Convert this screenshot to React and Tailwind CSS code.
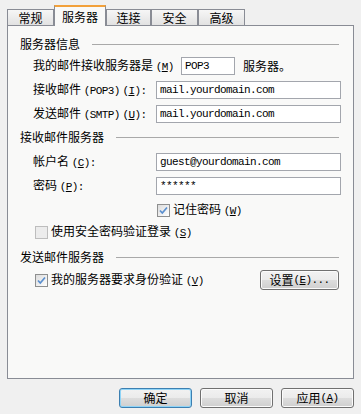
import React from 'react';

const cjk = { fontFamily: '"Noto Sans CJK SC", "Noto Sans", sans-serif' };

// half-width latin part, SimSun style (6px per char)
function M({ children }) {
  return (
    <span className="font-['Liberation_Mono',monospace] text-[11px] tracking-[-0.6px]">
      {children}
    </span>
  );
}

function Key({ k }) {
  return (
    <span className="font-['Liberation_Mono',monospace] text-[11px] tracking-[-0.6px]">
      (<span className="underline">{k}</span>)
    </span>
  );
}

function Tab({ label, w, active }) {
  if (active) {
    return (
      <div
        className={`${w} h-[21px] -mb-px z-10 bg-[#f9f9f8] border border-[#898c95] border-b-0 border-t-2 border-t-[#f2a03a] flex items-center justify-center text-[12px] text-black`}
      >
        {label}
      </div>
    );
  }
  return (
    <div
      className={`${w} h-[16px] bg-gradient-to-b from-[#f6f6f6] to-[#e2e2e2] border border-[#898c95] border-b-0 flex items-center justify-center text-[12px] text-black`}
    >
      {label}
    </div>
  );
}

function Header({ text, className = '' }) {
  return (
    <div className={`flex items-center h-[16px] ml-[12px] mr-[14px] ${className}`}>
      <span className="text-[12px] leading-none">{text}</span>
      <div className="flex-1 h-px bg-[#a9a9a9] ml-[12px]" />
    </div>
  );
}

function Input({ value, w = 'w-[185px]' }) {
  return (
    <div
      className={`${w} h-[18px] bg-white border border-[#a3a6ad] flex items-center pl-[3px] font-['Liberation_Mono',monospace] text-[11px] tracking-[-0.6px] text-black`}
    >
      {value}
    </div>
  );
}

function Check({ checked, disabled }) {
  return (
    <div
      className={`w-[13px] h-[13px] shrink-0 border ${
        disabled ? 'border-[#bdbdbd] bg-[#ececec]' : 'border-[#8e8f8f] bg-gradient-to-br from-[#dcdcdc] to-white'
      } flex items-center justify-center`}
    >
      {checked && (
        <svg width="11" height="11" viewBox="0 0 11 11">
          <path d="M2 5.5 L4.3 8 L9 2.5" fill="none" stroke="#5a8fcf" strokeWidth="1.7" />
        </svg>
      )}
    </div>
  );
}

function Button({ children, w = 'w-[73px]', primary }) {
  return (
    <div
      className={`${w} h-[20px] rounded-[3px] border ${
        primary ? 'border-[#3c7fb1] shadow-[inset_0_0_0_1px_#8fd4f7]' : 'border-[#707070] shadow-[inset_0_0_0_1px_#fbfbfb]'
      } bg-[linear-gradient(#f2f2f2_0%,#ebebeb_50%,#dddddd_51%,#cfcfcf_100%)] flex items-center justify-center text-[12px] text-black`}
    >
      {children}
    </div>
  );
}

export default function App() {
  return (
    <div style={cjk} className="w-[361px] h-[414px] bg-[#f0f0f0] pt-[4px] px-[7px] text-black overflow-hidden">
      {/* tabs */}
      <div className="flex items-end h-[21px]">
        <Tab label="常规" w="w-[47px]" />
        <Tab label="服务器" w="w-[52px]" active />
        <Tab label="连接" w="w-[45px]" />
        <Tab label="安全" w="w-[47px]" />
        <Tab label="高级" w="w-[47px]" />
      </div>

      {/* panel */}
      <div className="w-[347px] h-[354px] border border-[#898c95] bg-[#f9f9f8]">
        <Header text="服务器信息" className="mt-[10px]" />

        <div className="flex items-center h-[18px] mt-[5px] ml-[25px] text-[12px]">
          <div className="w-[148px]">
            我的邮件接收服务器是 <Key k="M" />
          </div>
          <Input value="POP3" w="w-[54px]" />
          <span className="ml-[8px]">服务器。</span>
        </div>

        <div className="flex items-center h-[18px] mt-[6px] ml-[25px] text-[12px]">
          <div className="w-[123px]">
            接收邮件 <M>(POP3)</M> <Key k="I" />
            <M>:</M>
          </div>
          <Input value="mail.yourdomain.com" />
        </div>

        <div className="flex items-center h-[18px] mt-[6px] ml-[25px] text-[12px]">
          <div className="w-[123px]">
            发送邮件 <M>(SMTP)</M> <Key k="U" />
            <M>:</M>
          </div>
          <Input value="mail.yourdomain.com" />
        </div>

        <Header text="接收邮件服务器" className="mt-[6px]" />

        <div className="flex items-center h-[18px] mt-[8px] ml-[25px] text-[12px]">
          <div className="w-[123px]">
            帐户名 <Key k="C" />
            <M>:</M>
          </div>
          <Input value="guest@yourdomain.com" />
        </div>

        <div className="flex items-center h-[18px] mt-[6px] ml-[25px] text-[12px]">
          <div className="w-[123px]">
            密码 <Key k="P" />
            <M>:</M>
          </div>
          <Input value="******" />
        </div>

        <div className="flex items-center h-[16px] mt-[7px] ml-[149px] text-[12px]">
          <Check checked />
          <span className="ml-[3px]">
            记住密码 <Key k="W" />
          </span>
        </div>

        <div className="flex items-center h-[16px] mt-[6px] ml-[27px] text-[12px]">
          <Check disabled />
          <span className="ml-[3px]">
            使用安全密码验证登录 <Key k="S" />
          </span>
        </div>

        <Header text="发送邮件服务器" className="mt-[9px]" />

        <div className="flex items-center h-[20px] mt-[5px] ml-[27px] mr-[14px] text-[12px]">
          <Check checked />
          <span className="ml-[3px]">
            我的服务器要求身份验证 <Key k="V" />
          </span>
          <div className="flex-1" />
          <Button w="w-[79px]">
            设置<Key k="E" />
            <M>...</M>
          </Button>
        </div>
      </div>

      {/* bottom buttons */}
      <div className="flex justify-end gap-[8px] mt-[9px]">
        <Button primary>确定</Button>
        <Button>取消</Button>
        <Button>
          应用<Key k="A" />
        </Button>
      </div>
    </div>
  );
}
